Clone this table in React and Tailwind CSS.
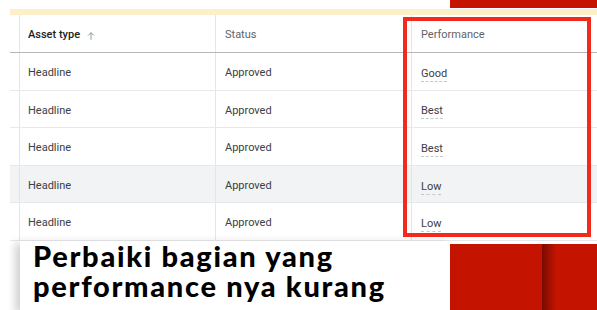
import React from "react";

const rows = [
  { type: "Headline", status: "Approved", perf: "Good", hl: false },
  { type: "Headline", status: "Approved", perf: "Best", hl: false },
  { type: "Headline", status: "Approved", perf: "Best", hl: false },
  { type: "Headline", status: "Approved", perf: "Low", hl: true },
  { type: "Headline", status: "Approved", perf: "Low", hl: false },
];

export default function App() {
  return (
    <div className="relative w-[597px] h-[310px] overflow-hidden bg-white" style={{ fontFamily: "Roboto, 'Liberation Sans', sans-serif" }}>
      {/* top band */}
      <div className="flex h-[9px]">
        <div className="flex-1" />
        <div className="w-[147px] h-[8px] bg-[#c41400]" />
      </div>
      {/* yellow strip */}
      <div className="ml-[10px] h-[6px] bg-[#fdefc8]" />
      {/* table */}
      <div className="ml-[10px] text-[11px]">
        <div className="grid grid-cols-[10px_196px_196px_1fr] h-[38px] border-b border-[#b4b8bd]">
          <div className="border-r border-[#e3e5e8]" />
          <div className="flex items-center pl-[8px] pt-[4px] border-r border-[#e3e5e8] font-medium text-[#202124]">
            Asset type
            <svg className="ml-[6px]" width="10" height="10" viewBox="0 0 24 24" fill="none" stroke="#80868b" strokeWidth="2">
              <path d="M12 21V4M5 11l7-7 7 7" />
            </svg>
          </div>
          <div className="flex items-center pl-[9px] pt-[4px] border-r border-[#e3e5e8] text-[#5f6368]">Status</div>
          <div className="flex items-center pl-[9px] pt-[4px] text-[#5f6368]">Performance</div>
        </div>
        {rows.map((r, i) => (
          <div
            key={i}
            className={`grid grid-cols-[10px_196px_196px_1fr] h-[37.6px] border-b border-[#e6e8eb] text-[#3c4043] ${r.hl ? "bg-[#f1f3f4]" : "bg-white"}`}
          >
            <div className="border-r border-[#e3e5e8]" />
            <div className="flex items-center pl-[8px] pt-[4px] border-r border-[#e3e5e8]">{r.type}</div>
            <div className="flex items-center pl-[9px] pt-[4px] border-r border-[#e3e5e8]">{r.status}</div>
            <div className="flex items-center pl-[9px] pt-[5px]">
              <span className="border-b border-dashed border-[#c4c7cb] leading-[15px]">{r.perf}</span>
            </div>
          </div>
        ))}
      </div>
      {/* bottom */}
      <div className="flex h-[70px]">
        <div className="w-[20px]" />
        <div className="relative w-[430px] bg-white shadow-[-5px_2px_8px_rgba(0,0,0,0.18)] pl-[13px]">
          <div
            className="text-[29px] leading-[30px] font-black text-black tracking-[1.7px]"
            style={{ fontFamily: "Lato, 'Noto Sans', sans-serif" }}
          >
            <div>Perbaiki bagian yang</div>
            <div>performance nya kurang</div>
          </div>
        </div>
        <div className="flex-1 mt-[3px] bg-[#c41400] flex">
          <div className="w-[92px]" />
          <div className="w-[14px] bg-gradient-to-r from-[#7a0a00] to-[#c41400]" />
        </div>
      </div>
      {/* red highlight box */}
      <div className="absolute left-[403px] top-[17px] w-[188px] h-[220px] border-[4px] border-[#f2291d]" />
    </div>
  );
}
